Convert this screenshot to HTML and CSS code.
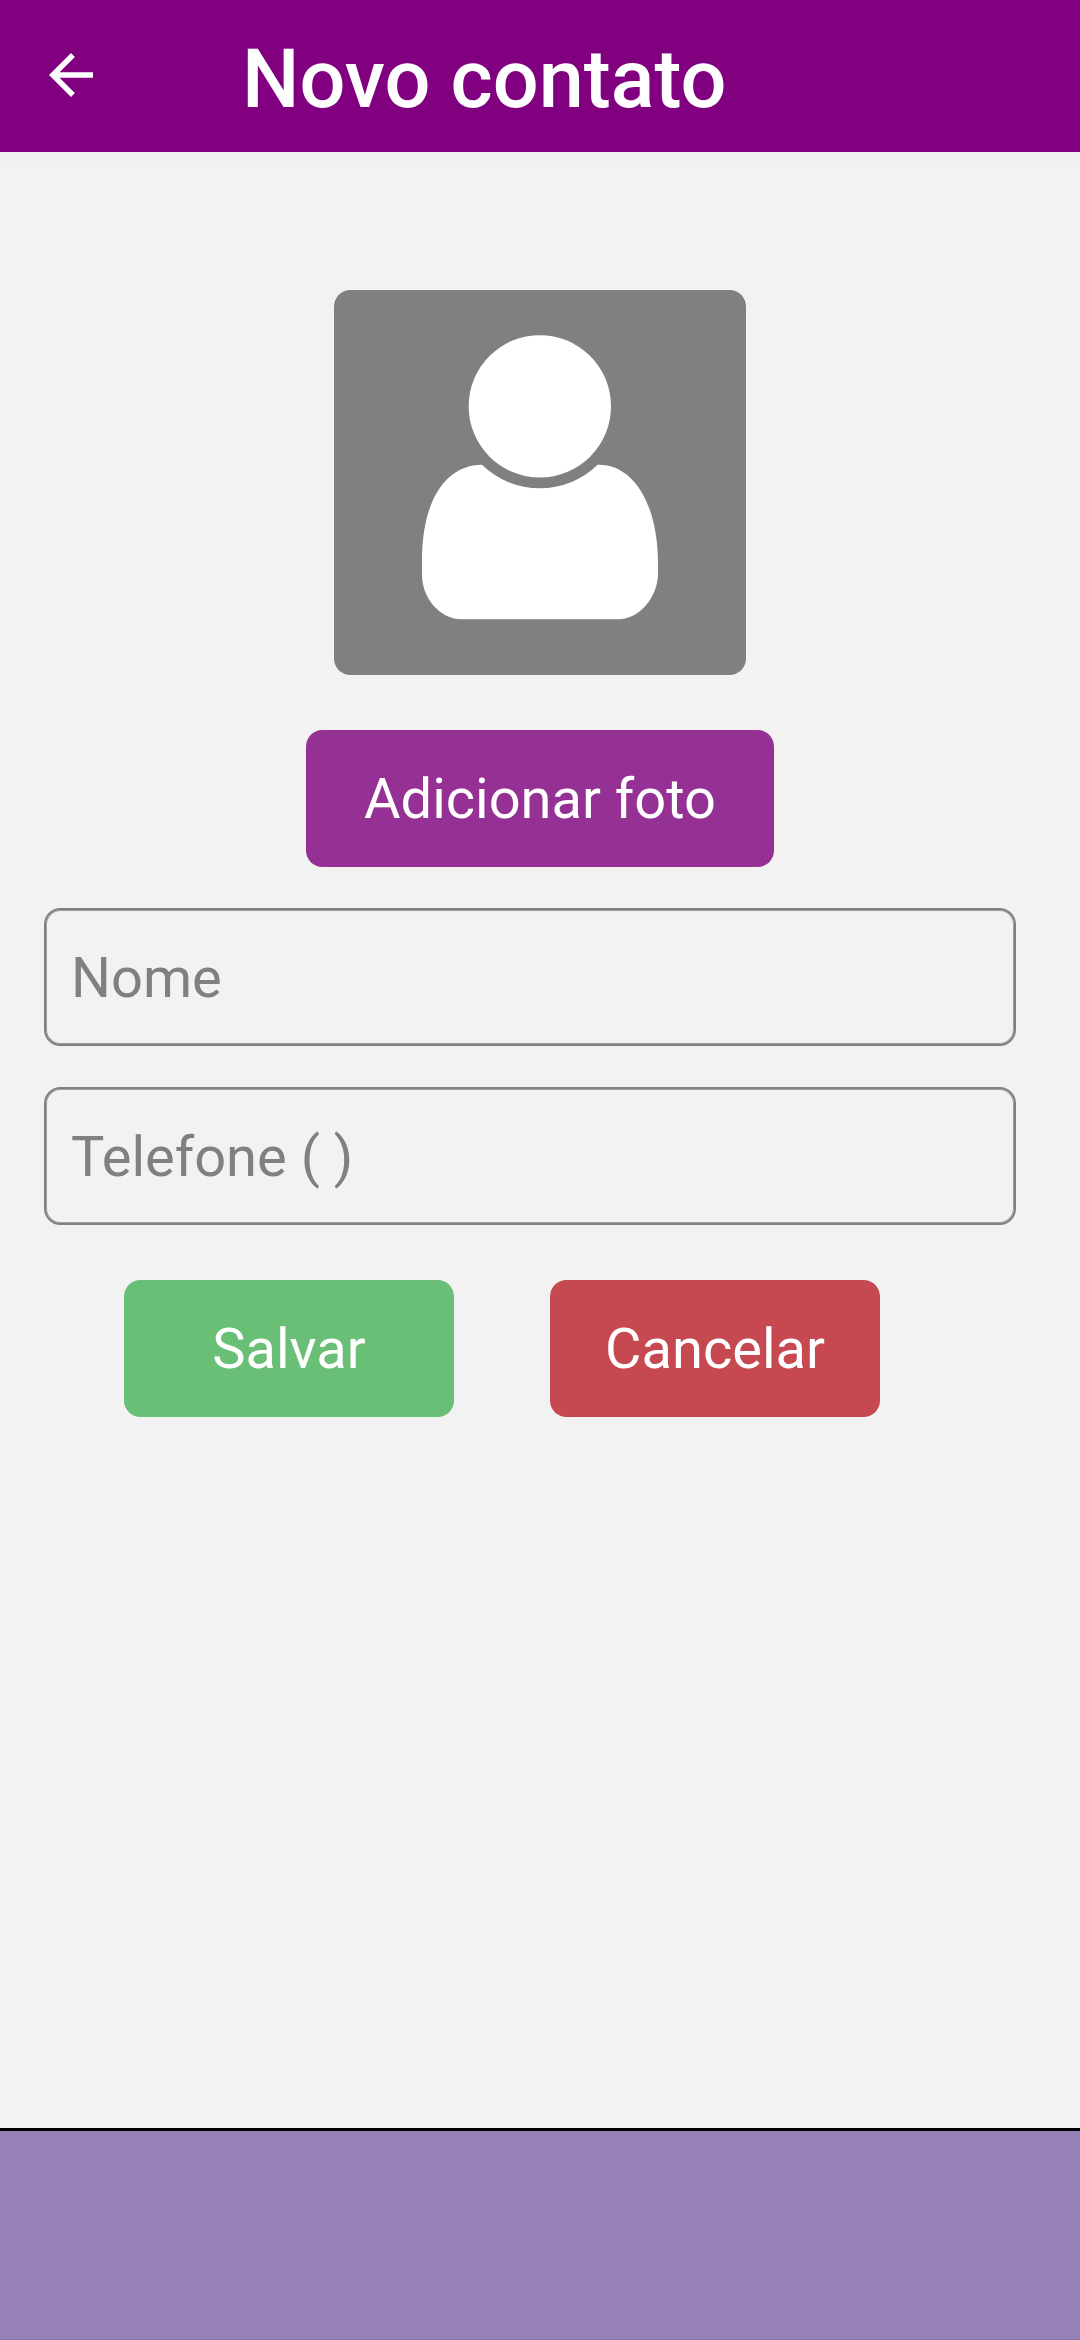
FILE: index.html
```html
<!DOCTYPE html>
<html lang="pt-BR">
<head>
<meta charset="utf-8">
<title>Novo contato</title>
<link rel="stylesheet" href="styles.css">
</head>
<body>
<div class="screen">
  <header class="app-bar">
    <button class="back" type="button" aria-label="Voltar">
      <svg viewBox="0 0 24 24"><path d="M20 11H7.83l5.59-5.59L12 4l-8 8 8 8 1.41-1.41L7.83 13H20v-2z"/></svg>
    </button>
    <h1 class="title">Novo contato</h1>
  </header>
  <main class="content">
    <div class="avatar">
      <svg viewBox="42 30 1236 1155">
        <circle cx="659.5" cy="379" r="213.5"/>
        <path d="M486 554A248 248 0 0 0 833 554C940 551 1014 672 1014 850V880C1014 952 958 1018 895 1018H426C361 1018 306 955 306 885V840C306 665 375 555 486 554Z"/>
      </svg>
    </div>
    <button class="btn btn-photo" type="button">Adicionar foto</button>
    <form class="form">
      <input class="field" type="text" placeholder="Nome">
      <input class="field" type="text" placeholder="Telefone ( )">
      <div class="actions">
        <button class="btn btn-save" type="button">Salvar</button>
        <button class="btn btn-cancel" type="button">Cancelar</button>
      </div>
    </form>
  </main>
  <footer class="bottom-bar"></footer>
</div>
</body>
</html>
```
FILE: styles.css
```css
* { box-sizing: border-box; }

body {
  margin: 0;
  background: #f2f2f2;
  font-family: Roboto, sans-serif;
}

button { border: 0; padding: 0; font: inherit; }

.screen {
  display: flex;
  flex-direction: column;
  width: 1080px;
  height: 2340px;
}

.app-bar {
  display: flex;
  align-items: center;
  height: 152px;
  padding-left: 38px;
  background: #800080;
}

.back {
  width: 66px;
  height: 66px;
  margin-bottom: 2px;
  background: none;
}

.back svg { display: block; fill: #fff; }

.title {
  margin: 6px 0 0 138px;
  color: #fff;
  font-size: 81px;
  font-weight: 500;
  line-height: 97px;
  white-space: nowrap;
}

.content {
  display: flex;
  flex: 1;
  flex-direction: column;
  align-items: center;
  padding-top: 138px;
  background: linear-gradient(#efefef, #f2f2f2 24px);
}

.avatar {
  width: 412px;
  height: 385px;
  border-radius: 16.5px;
  background: #808080;
}

.avatar svg {
  display: block;
  width: 100%;
  height: 100%;
  fill: #fff;
}

.btn {
  height: 137px;
  border-radius: 16.5px;
  color: #fff;
  font-size: 56px;
  line-height: 64px;
}

.btn-photo {
  width: 468px;
  margin-top: 55px;
  background: #953094;
}

.form {
  display: flex;
  flex-direction: column;
  align-self: flex-start;
  gap: 41px;
  width: 972px;
  margin: 41px 0 0 44px;
}

.field {
  width: 100%;
  height: 138px;
  padding: 1px 25px 0;
  border: 2px solid #808080;
  border-radius: 16.5px;
  outline: 0;
  background: transparent;
  box-shadow: inset 0 0 0 1px rgba(128, 128, 128, 0.75);
  color: #808080;
  font: 56px Roboto, sans-serif;
}

.field::placeholder { color: #808080; opacity: 1; }

.actions {
  display: flex;
  gap: 96px;
  margin: 14px 0 0 80px;
}

.actions .btn { width: 330px; }
.btn-save { background: #6abf77; }
.btn-cancel { background: #c64851; }

.bottom-bar {
  height: 212px;
  border-top: 3px solid #000;
  border-bottom: 1px solid #8573a2;
  background: #9581b5;
}
```
